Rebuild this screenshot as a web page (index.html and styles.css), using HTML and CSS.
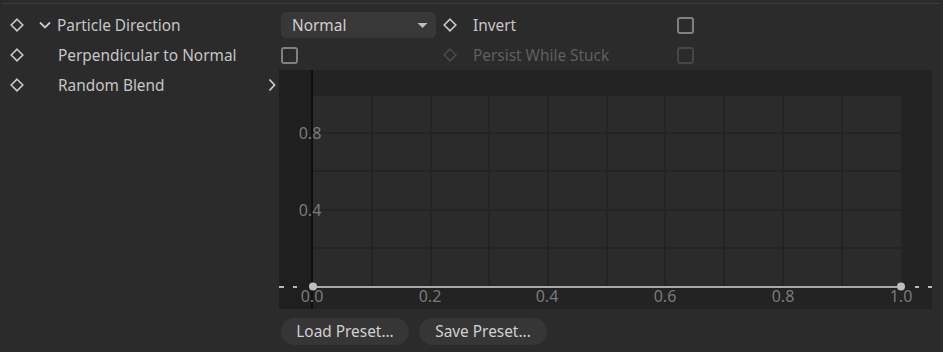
FILE: index.html
```html
<!DOCTYPE html>
<html>
<head>
<meta charset="utf-8">
<link rel="stylesheet" href="styles.css">
</head>
<body>
<div class="page">
  <div class="topline"></div>
  <div class="grid">
    <div class="left row">
      <svg class="diamond" viewBox="0 0 14 14"><path d="M7 1.2 L12.8 7 L7 12.8 L1.2 7 Z"/></svg>
      <svg class="chev-down" viewBox="0 0 12 8"><path d="M1 1.5 L6 6.5 L11 1.5"/></svg>
      <span class="label">Particle Direction</span>
    </div>
    <div class="right row">
      <div class="ctl">
        <div class="dropdown"><span>Normal</span><svg class="tri" viewBox="0 0 10 5"><path d="M0 0 H10 L5 5 Z"/></svg></div>
      </div>
      <svg class="diamond" viewBox="0 0 14 14"><path d="M7 1.2 L12.8 7 L7 12.8 L1.2 7 Z"/></svg>
      <span class="label rlabel">Invert</span>
      <span class="check"></span>
    </div>

    <div class="left row">
      <svg class="diamond" viewBox="0 0 14 14"><path d="M7 1.2 L12.8 7 L7 12.8 L1.2 7 Z"/></svg>
      <span class="label indent">Perpendicular to Normal</span>
    </div>
    <div class="right row">
      <div class="ctl"><span class="check first"></span></div>
      <svg class="diamond dim" viewBox="0 0 14 14"><path d="M7 1.2 L12.8 7 L7 12.8 L1.2 7 Z"/></svg>
      <span class="label rlabel dimtext">Persist While Stuck</span>
      <span class="check dimcheck"></span>
    </div>

    <div class="left row top">
      <svg class="diamond" viewBox="0 0 14 14"><path d="M7 1.2 L12.8 7 L7 12.8 L1.2 7 Z"/></svg>
      <span class="label indent grow">Random Blend</span>
      <svg class="chev-right" viewBox="0 0 8 14"><path d="M1.5 1.5 L6.5 7 L1.5 12.5"/></svg>
    </div>
    <div class="right graphcell">
      <svg class="graph" width="653" height="239" viewBox="0 0 653 239">
        <rect x="0" y="0" width="653" height="239" fill="#232323"/>
        <rect x="0" y="0" width="32" height="239" fill="#1f1f1f"/>
        <rect x="34" y="26" width="588" height="191" fill="#2b2b2b"/>
        <g stroke="#242424" stroke-width="2">
          <line x1="93" y1="26" x2="93" y2="217"/>
          <line x1="152" y1="26" x2="152" y2="217"/>
          <line x1="210" y1="26" x2="210" y2="217"/>
          <line x1="269" y1="26" x2="269" y2="217"/>
          <line x1="328" y1="26" x2="328" y2="217"/>
          <line x1="386" y1="26" x2="386" y2="217"/>
          <line x1="445" y1="26" x2="445" y2="217"/>
          <line x1="504" y1="26" x2="504" y2="217"/>
          <line x1="563" y1="26" x2="563" y2="217"/>
          <line x1="34" y1="63" x2="622" y2="63"/>
          <line x1="34" y1="101" x2="622" y2="101"/>
          <line x1="34" y1="140" x2="622" y2="140"/>
          <line x1="34" y1="178" x2="622" y2="178"/>
        </g>
        <rect x="32" y="0" width="2" height="239" fill="#0e0e0e"/>
        <g fill="#7a7a7a" class="axis">
          <text x="31" y="69" text-anchor="middle">0.8</text>
          <text x="31" y="146" text-anchor="middle">0.4</text>
          <text x="33" y="232" text-anchor="middle">0.0</text>
          <text x="151" y="232" text-anchor="middle">0.2</text>
          <text x="268" y="232" text-anchor="middle">0.4</text>
          <text x="386" y="232" text-anchor="middle">0.6</text>
          <text x="504" y="232" text-anchor="middle">0.8</text>
          <text x="622" y="232" text-anchor="middle">1.0</text>
        </g>
        <g stroke="#b8b8b8" stroke-width="2">
          <line x1="0" y1="217" x2="5" y2="217"/>
          <line x1="14" y1="217" x2="18" y2="217"/>
          <line x1="636" y1="217" x2="640" y2="217"/>
          <line x1="649" y1="217" x2="653" y2="217"/>
        </g>
        <line x1="34" y1="217" x2="622" y2="217" stroke="#a9a9a9" stroke-width="2"/>
        <circle cx="34" cy="216.5" r="4" fill="#bdbdbd"/>
        <circle cx="622" cy="216.5" r="4" fill="#bdbdbd"/>
      </svg>
      <div class="buttons">
        <button class="btn">Load Preset...</button>
        <button class="btn">Save Preset...</button>
      </div>
    </div>
  </div>
</div>
</body>
</html>
```

FILE: styles.css
```css
html, body {
  margin: 0;
  padding: 0;
  background: #2b2b2b;
}
body {
  width: 943px;
  height: 352px;
  overflow: hidden;
  font-family: "Noto Sans", "Open Sans", sans-serif;
  font-size: 15.4px;
  color: #c6c6c6;
}
.page {
  display: flex;
  flex-direction: column;
}
.topline {
  height: 1px;
  background: #3c3c3c;
  margin: 3px 3px 0 2px;
}
.grid {
  margin-top: 6px;
  display: grid;
  grid-template-columns: 279px 664px;
}
.row {
  height: 30px;
  display: flex;
  align-items: center;
}
.left.top {
  align-self: start;
}
.diamond {
  width: 14px;
  height: 14px;
  flex: none;
}
.diamond path {
  fill: none;
  stroke: #c9c9c9;
  stroke-width: 1.6;
}
.diamond.dim path {
  stroke: #4a4a4a;
}
.left .diamond {
  margin-left: 10px;
}
.chev-down {
  width: 12px;
  height: 8px;
  margin-left: 15px;
  flex: none;
}
.chev-down path, .chev-right path {
  fill: none;
  stroke: #c9c9c9;
  stroke-width: 1.8;
}
.chev-right {
  width: 8px;
  height: 14px;
  margin-right: 3px;
  flex: none;
}
.label {
  white-space: nowrap;
  margin-left: 6px;
}
.label.indent {
  margin-left: 34px;
}
.grow {
  flex: 1;
}
.ctl {
  width: 162px;
  margin-left: 2px;
  display: flex;
  align-items: center;
  flex: none;
}
.dropdown {
  width: 155px;
  height: 26px;
  box-sizing: border-box;
  background: #383838;
  border-radius: 5px;
  display: flex;
  align-items: center;
  justify-content: space-between;
  padding: 0 8px 0 11px;
  color: #d0d0d0;
}
.tri {
  width: 11px;
  height: 5px;
}
.tri path {
  fill: #bdbdbd;
}
.rlabel {
  width: 204px;
  margin-left: 16px;
  flex: none;
}
.check {
  width: 17px;
  height: 17px;
  box-sizing: border-box;
  border: 2px solid #808080;
  border-radius: 3px;
  flex: none;
}
.check.first {
  margin-left: 0;
}
.dimtext {
  color: #5f5f5f;
}
.dimcheck {
  border-color: #474747;
}
.graphcell {
  display: flex;
  flex-direction: column;
}
.graph {
  display: block;
}
.axis {
  font-family: "Noto Sans", "Open Sans", sans-serif;
  font-size: 16px;
}
.buttons {
  display: flex;
  gap: 10px;
  margin-top: 9px;
  margin-left: 2px;
}
.btn {
  height: 27px;
  border: none;
  border-radius: 14px;
  background: #363636;
  color: #d0d0d0;
  font-family: "Noto Sans", "Open Sans", sans-serif;
  font-size: 15.4px;
  padding: 0 10px;
  width: 128px;
}
```
